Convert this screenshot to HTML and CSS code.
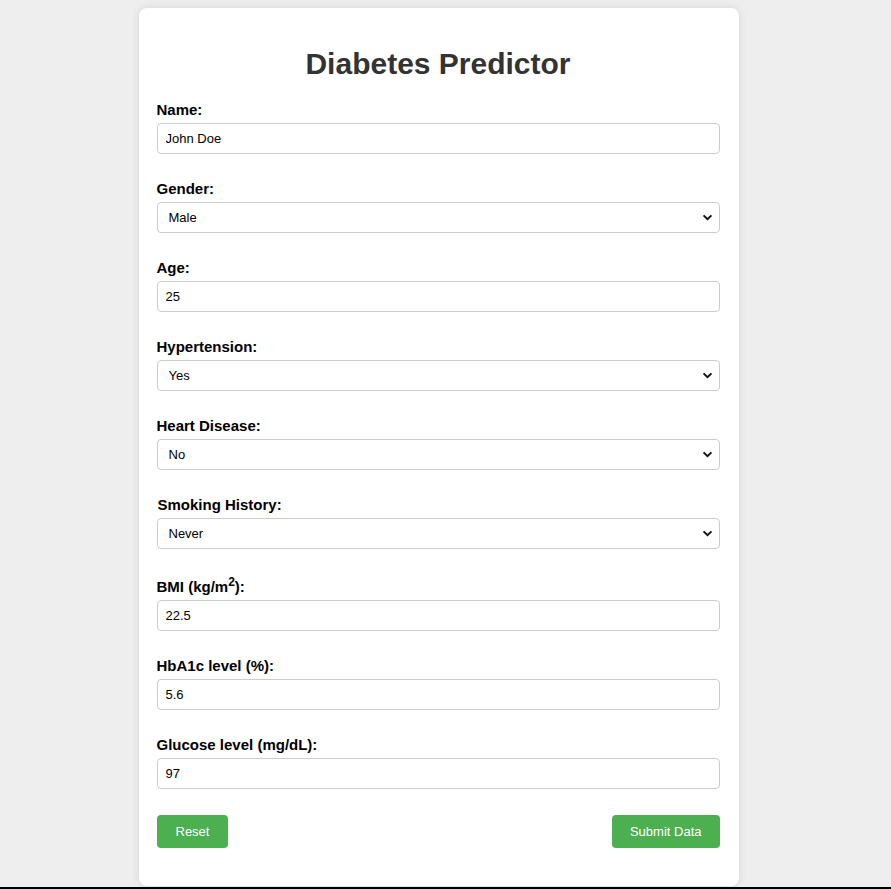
FILE: index.html
```html
<!DOCTYPE html>
<html lang="en">
<head>
<meta charset="utf-8">
<title>Diabetes Predictor</title>
<link rel="stylesheet" href="styles.css">
</head>
<body>
<div class="card">
  <h1 class="title">Diabetes Predictor</h1>
  <form class="form">
    <div class="group">
      <label class="label" for="name">Name:</label>
      <input class="field" id="name" type="text" value="John Doe">
    </div>
    <div class="group">
      <label class="label" for="gender">Gender:</label>
      <select class="field select" id="gender">
        <option>Male</option>
        <option>Female</option>
      </select>
    </div>
    <div class="group">
      <label class="label" for="age">Age:</label>
      <input class="field" id="age" type="text" value="25">
    </div>
    <div class="group">
      <label class="label" for="hyp">Hypertension:</label>
      <select class="field select" id="hyp">
        <option>Yes</option>
        <option>No</option>
      </select>
    </div>
    <div class="group">
      <label class="label" for="heart">Heart Disease:</label>
      <select class="field select" id="heart">
        <option>No</option>
        <option>Yes</option>
      </select>
    </div>
    <div class="group">
      <label class="label label-indent" for="smoke">Smoking History:</label>
      <select class="field select" id="smoke">
        <option>Never</option>
        <option>Former</option>
        <option>Current</option>
      </select>
    </div>
    <div class="group">
      <label class="label" for="bmi">BMI (kg/m<sup>2</sup>):</label>
      <input class="field" id="bmi" type="text" value="22.5">
    </div>
    <div class="group">
      <label class="label" for="hba">HbA1c level (%):</label>
      <input class="field" id="hba" type="text" value="5.6">
    </div>
    <div class="group">
      <label class="label" for="glu">Glucose level (mg/dL):</label>
      <input class="field" id="glu" type="text" value="97">
    </div>
    <div class="actions">
      <button class="btn btn-reset" type="reset">Reset</button>
      <button class="btn" type="button">Submit Data</button>
    </div>
  </form>
</div>
<div class="edge"></div>
</body>
</html>
```
FILE: styles.css
```css
html, body {
  margin: 0;
  padding: 0;
}
body {
  background: #eeeeee;
  font-family: "Liberation Sans", Arial, sans-serif;
  padding: 8px 14px 8px 0;
}
.card {
  width: 600px;
  box-sizing: border-box;
  margin: 0 auto;
  background: #ffffff;
  border-radius: 8px;
  box-shadow: 0 0 10px rgba(0, 0, 0, 0.1);
  padding: 20px 19px 38px 18px;
}
.title {
  margin: 19px 0 20px;
  text-align: center;
  font-size: 30px;
  font-weight: bold;
  color: #333333;
}
.form {
  display: flex;
  flex-direction: column;
}
.group {
  display: flex;
  flex-direction: column;
  margin-bottom: 26px;
}
.label {
  font-size: 15px;
  font-weight: bold;
  color: #000;
  margin-bottom: 5px;
}
.label-indent {
  padding-left: 1px;
}
.label sup {
  font-size: 12px;
}
.field {
  box-sizing: border-box;
  width: 100%;
  height: 31px;
  border: 1px solid #cccccc;
  border-radius: 4px;
  padding: 7px 8px;
  font-family: "Liberation Sans", Arial, sans-serif;
  font-size: 13px;
  color: #000;
  background: #ffffff;
  margin: 0;
}
.select {
  appearance: none;
  -webkit-appearance: none;
  padding: 6px 24px 6px 11px;
  background-image: url("data:image/svg+xml;utf8,<svg xmlns='http://www.w3.org/2000/svg' width='12' height='8' viewBox='0 0 12 8'><path d='M1.5 1.5 L6 6 L10.5 1.5' fill='none' stroke='%23111' stroke-width='2.2'/></svg>");
  background-repeat: no-repeat;
  background-position: right 6px center;
  background-size: 11px 7px;
}
.actions {
  display: flex;
  justify-content: space-between;
  align-items: center;
  margin-top: 0;
}
.btn {
  background: #4caf50;
  color: #ffffff;
  border: none;
  border-radius: 4px;
  padding: 9px 18px;
  font-family: "Liberation Sans", Arial, sans-serif;
  font-size: 13px;
  line-height: 15px;
  cursor: pointer;
}
.btn-reset {
  padding: 9px 19px;
}
.edge {
  position: fixed;
  left: 0;
  right: 0;
  bottom: 0;
  height: 2px;
  background: #000;
}
```
